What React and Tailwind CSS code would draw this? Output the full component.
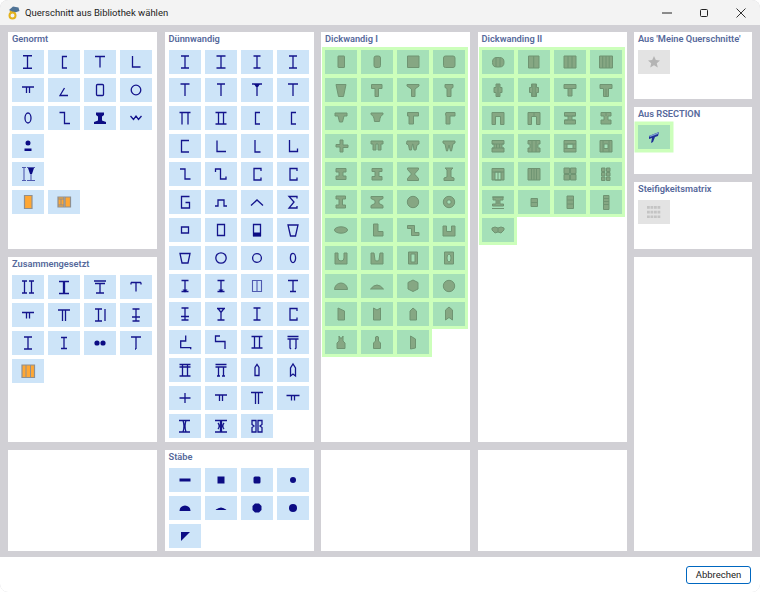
import React from 'react';

const FONT = "font-['Roboto','Noto_Sans',sans-serif]";

// path helpers, all in the 32x24 tile space
const ib = (w, h, cx = 16) =>
  `M${cx - w / 2} ${12 - h / 2}h${w}M${cx - w / 2} ${12 + h / 2}h${w}M${cx} ${12 - h / 2}v${h}`;
const tee = (w, h) => `M${16 - w / 2} ${12 - h / 2}h${w}M16 ${12 - h / 2}v${h}`;
const circ = (r, cx = 16, cy = 12) =>
  `M${cx - r} ${cy}a${r} ${r} 0 1 0 ${2 * r} 0a${r} ${r} 0 1 0 ${-2 * r} 0z`;
const oval = (rx, ry, cx = 16, cy = 12) =>
  `M${cx - rx} ${cy}a${rx} ${ry} 0 1 0 ${2 * rx} 0a${rx} ${ry} 0 1 0 ${-2 * rx} 0z`;
const rect = (x, y, w, h) => `M${x} ${y}h${w}v${h}h${-w}z`;
const rr = (x, y, w, h, r) =>
  `M${x + r} ${y}h${w - 2 * r}q${r} 0 ${r} ${r}v${h - 2 * r}q0 ${r} ${-r} ${r}h${-w + 2 * r}q${-r} 0 ${-r} ${-r}v${-h + 2 * r}q0 ${-r} ${r} ${-r}z`;

const genormt = [
  { s: ib(9, 12.5, 15.5) },
  { s: 'M19 6.5h-4.5v11.5h4.5' },
  { s: tee(10, 11) },
  { s: 'M12.5 6v11h8' },
  { s: 'M10 9h12M14.5 9v6M17.5 9v6' },
  { s: 'M20 17.5h-8l4.5-7.5' },
  { s: rr(12.5, 6.5, 7, 11, 1) },
  { s: circ(4.8) },
  { s: oval(3, 5, 16, 12) },
  { s: 'M11.5 6.5h5v11h5.5' },
  { f: 'M12 6.5h8v2.5l-2 1.5v4l4 1.5v2h-12v-2l4-1.5v-4l-2-1.5z' },
  { s: 'M10.5 10l3 3.5 2.5-3.5 2.5 3.5 3-3.5' },
  { f: circ(2.5, 16, 9) + rect(12.5, 14.5, 7, 2.5) },
  null,
  null,
  null,
  { l: ib(4, 13, 12) + 'M15 5.5h8M15 18.5h8M19 5.5v13', f: 'M16 6h6l-2 6h-2z' },
  null,
  null,
  null,
  { o: [rect(12.5, 5.5, 7.5, 13)] },
  { o: [rect(10, 7, 6, 10), rect(17, 7, 5.5, 10)], n: 'M10 9h6M10 15h6M13 9v6' },
];

const zusammen = [
  { s: ib(5, 12, 12.5) + ib(5, 12, 19.5) },
  { s: 'M11 6.5h4.5v12h-4.5M21 6.5h-4.5v12h4.5' },
  { s: 'M10 6h12M11 8.5h10M16 8.5v9M12 18h8' },
  { s: tee(10, 9) + 'M11 7.5v2M21 7.5v2' },
  { s: 'M10 9.5h12M14.5 9.5v6M17.5 9.5v6' },
  { s: 'M10 7h12M14.5 7v11M17.5 7v11' },
  { s: ib(7, 12, 14.5) + 'M21 6v12' },
  { s: ib(7, 12) + 'M12 14h8' },
  { s: ib(8, 12) },
  { s: ib(6, 11) },
  { f: circ(2.6, 13, 12) + circ(2.6, 19, 12) },
  { s: tee(10, 12) + 'M15 18h1' },
  { o: [rect(10, 6, 12.5, 12.5)], n: 'M14 6v12.5M18.5 6v12.5' },
];

const duenn = [
  { s: ib(8, 12) }, { s: ib(9, 12) }, { s: ib(7, 12) }, { s: ib(8, 12) },
  { s: tee(9, 12) }, { s: tee(8, 12) }, { s: tee(10, 12), f: 'M13 6h6l-2 3h-2z' }, { s: tee(10, 12) },
  { s: 'M10.5 6.5h11M13 6.5v12M19 6.5v12' }, { s: 'M10.5 6.5h11M10.5 18h11M13.5 6.5v11.5M18.5 6.5v11.5' }, { s: 'M19 6.5h-4.5v11.5h4.5' }, { s: 'M19 6.5h-4.5v11.5h4.5' },
  { s: 'M20 6.5h-7.5v11.5h7.5' }, { s: 'M12 6.5v11h9' }, { s: 'M14 6v12h5.5' }, { s: 'M12.5 6v11.5h8v-3' },
  { s: 'M11 7h5v10h5.5' }, { s: 'M10.5 10v-3h5v10h5.5v-2.5' }, { s: 'M20 9v-2.5h-7v11.5h7v-2.5' }, { s: 'M20 9v-2.5h-7v11.5h7v-2.5' },
  { s: 'M20.5 6.5h-8v11.5h8v-5.5h-4' }, { s: 'M10 16h3v-6h6v6h3' }, { s: 'M10 15.5l6-5.5 6 5.5' }, { s: 'M20 8.5v-2h-8l5 5.5-5 6h8v-2' },
  { s: rect(12.5, 9, 7, 6) }, { s: rect(12.5, 6.5, 7, 11) }, { s: rect(12.5, 6.5, 7, 11), f: rect(12, 14.5, 8, 4) }, { s: 'M11 7h10l-2.5 11h-5z' },
  { s: 'M11 7.5h10l-2 9.5h-6z' }, { s: circ(5.2) }, { s: circ(4.4) }, { s: oval(2.6, 4.6) },
  { s: ib(7, 11), f: 'M13.5 15.5h5l-2.5 3z' }, { s: ib(7, 11), f: 'M13.5 15.5h5l-2.5 3z' }, { l: rect(11.5, 6.5, 9, 11) + 'M16 6.5v11' }, { s: tee(10, 11) + 'M13 17.5h6' },
  { s: ib(7, 12) + 'M12 14.5h8' }, { s: 'M12 6.5h8M13 6.5l3 4 3-4M16 10v8M12.5 18h7' }, { s: ib(7, 12) }, { s: 'M20 9v-2.5h-7v11.5h7v-2.5' },
  { s: 'M16.7 5.5v5.5h-5v6.7h10v1.5' }, { s: 'M15 6h-4.5v5.5h9.5v7.5' }, { s: 'M10.5 6.5h11M10.5 18h11M13.5 6.5v11.5M18.5 6.5v11.5' }, { s: 'M10.5 6.5h11M10.5 9h11M13 9v9l1 1M19 9v9l-1 1' },
  { s: 'M10.5 6.5h11M10.5 18h11M13.5 6.5v11.5M18.5 6.5v11.5M10.5 9h11' }, { s: 'M10.5 6.5h11M10.5 9h11M13.5 9v9M18.5 9v9M12 18h3M17 18h3' }, { s: 'M14 17.5v-8l2-3 2 3v8z' }, { s: 'M13.5 18v-8l2.5-4 2.5 4v8l-2.5-2z' },
  { s: 'M10.5 12h11M16 7v10' }, { s: 'M10 9h12M14.5 9v6M17.5 9v6' }, { s: 'M10 6.5h12M14.5 6.5v11.5M17.5 6.5v11.5' }, { s: 'M9.5 9.5h13M14.5 9.5v5M17.5 9.5v5' },
  { s: 'M10 6.5h11M10 18h11M14 6.5q2 5.5 0 11.5M17 6.5q-2 5.5 0 11.5' }, { s: 'M10 6.5h5.5v11.5h-5.5M22 6.5h-5.5v11.5h5.5M13 9q2.5 3 0 6M19 9q-2.5 3 0 6' }, { s: 'M15 6.5h-4v4l2 1.5-2 1.5v4.5h4zM17 6.5h4v4l-2 1.5 2 1.5v4.5h-4z' },
];

const staebe = [
  { f: rect(10.5, 10.5, 11, 3) },
  { f: rect(12.5, 8.5, 7, 7) },
  { f: rr(12.5, 8.5, 7, 7, 1.5) },
  { f: circ(3) },
  { f: 'M10.5 15a5.5 5.5 0 0 1 11 0z' },
  { f: 'M10.5 14q5.5-5 11 0z' },
  { f: 'M14 7.5h4l2.5 2.5v4l-2.5 2.5h-4l-2.5-2.5v-4z' },
  { f: circ(4) },
  { f: 'M12 8h9l-9 9z' },
];

const dick1 = [
  { g: rr(13, 6, 6.5, 11.5, 0.5) }, { g: rr(13, 6, 6.5, 11.5, 2) }, { g: rect(10.5, 6, 11.5, 11.5) }, { g: rr(10.5, 6, 11.5, 11.5, 2) },
  { g: 'M11 6.5h10l-2.5 12h-5z' }, { g: 'M10.5 6.5h10.5v4h-3.5v8h-3.5v-8h-3.5z' }, { g: 'M10 6.5h12v1.5l-4 3v7.5h-3.5v-7.5l-4.5-3z' }, { g: 'M12 6.5h8v3l-2 1v8h-4v-8l-2-1z' },
  { g: 'M10 7h12v3h-3l-1.5 6h-3l-1.5-6h-3z' }, { g: 'M10 7h12v1.5q-3 1-3.5 7h-5q-.5-6-3.5-7z' }, { g: 'M10.5 6.5h11v3.5h-5v8h-4.5v-8h-1.5z' }, { g: 'M13 6.5h9v3.5h-5v8h-4v-8q-1-2 0-3.5z' },
  { g: 'M15 6h3v5h5v2.5h-5v4.5h-3v-5h-4v-2.5h4z' }, { g: 'M10 7h12v3h-2v6h-3v-6h-2v6h-3v-6h-2z' }, { g: 'M10 7h12v3l-2 1-1 5h-2l-1-6h-.5l-1 6h-2l-1-5-2-1z' }, { g: 'M10 7h12v2l-2 1-1.5 7h-1l-1.5-6-1.5 6h-1l-1.5-7-2-1z' },
  { g: 'M11 6.5h10v3.5h-3v4h3v3.5h-10v-3.5h3v-4h-3z' }, { g: 'M11 6.5h10v3h-3v5h3v3.5h-10v-3.5h3v-5h-3z' }, { g: 'M10.5 6h11v1.5l-4 4.5 4 4.5v2h-11v-2l4-4.5-4-4.5z' }, { g: 'M12 6h8l-2 2v7l3 1v2.5h-10v-2.5l3-1v-7z' },
  { g: 'M11 6h9.5v3h-3v6h3v3h-9.5v-3h3v-6h-3z' }, { g: 'M10 6.5h12v2l-4 2v3l4 2v2.5h-12v-2.5l4-2v-3l-4-2z' }, { g: circ(5.7) }, { g: circ(5.7) + circ(2.2), e: true },
  { g: oval(6.5, 3.2) }, { g: 'M12.5 6h4.5v7.5h5v4.5h-9.5z' }, { g: 'M10.5 7.5h7v7h4.5v3h-7.5v-7h-4z' }, { g: 'M10 8h3.5v5.5h5v-5.5h3.5v10h-12z' },
  { g: 'M10 7h3v5q0 3 3 3t3-3v-5h3v11h-12z' }, { g: 'M10 7h3l1 7q0 1 2 1t2-1l1-7h3v11h-12z' }, { g: rect(11.5, 6, 9, 12) + rect(14, 8, 4, 8), e: true }, { g: rect(11.5, 6, 9, 12) + oval(2, 4), e: true },
  { g: 'M9.5 15.5a6.5 6.5 0 0 1 13 0z' }, { g: 'M9.5 15q6.5-8 13 0z' }, { g: 'M16 6l5 2.5v6.5l-5 2.5-5-2.5v-6.5z' }, { g: circ(5.7) },
  { g: 'M13 6l6.5 3v9h-6.5z' }, { g: 'M12.5 6l3.5 2 3.5-2v12h-7z' }, { g: 'M13 9l3-3 3.5 3v9h-6.5z' }, { g: 'M12.5 8l3.5-3 3.5 3v10l-3.5-2.5-3.5 2.5z' },
  { g: 'M14 6l1 2h2l1-2v5l2 2v5.5h-8v-5.5l2-2z' }, { g: 'M14.5 7q1.5-1.5 3 0v4l2 2v5.5h-7v-5.5l2-2z' }, { g: 'M13.5 6l5 3v9l-5 1z' },
];

const dick2 = [
  { g: rr(10.5, 7.5, 11.5, 9.5, 4.5), n: 'M14 7.5v9.5M18 7.5v9.5' },
  { g: rect(10.5, 6, 10.5, 12), n: 'M15.7 6v12' },
  { g: rect(10, 6, 12, 12), n: 'M14 6v12M18 6v12' },
  { g: rect(9.5, 6, 13, 12), n: 'M12.7 6v12M16 6v12M19.2 6v12' },
  { g: 'M14 6h4v3.5h2v5h-2v4h-4v-4h-2v-5h2z', n: 'M16 6v12.5' },
  { g: 'M13.5 6h5v3.5h2v5h-2v4h-5v-4h-2v-5h2z', n: 'M14.8 6v12.5M17.2 6v12.5' },
  { g: 'M10 6.5h12v4h-4v7.5h-4v-7.5h-4z', n: 'M10 10.5h12' },
  { g: 'M10 6.5h12v4h-3.5v8h-5v-8h-3.5z', n: 'M16 10.5v8' },
  { g: 'M10 6.5h12v12h-3.5v-8h-5v8h-3.5z', n: 'M13.5 10.5h5' },
  { g: 'M10 6.5h12v12h-3.5v-8h-5v8h-3.5z', n: 'M16 6.5v4' },
  { g: 'M10.5 6.5h11v3.5h-3.5v4h3.5v4h-11v-4h3.5v-4h-3.5z', n: 'M10.5 10h11M10.5 14h11' },
  { g: 'M11 6.5h10v3.5h-3v4h3v4h-10v-4h3v-4h-3z', n: 'M16 6.5v3.5' },
  { g: 'M10 6.5h12v3.5h-2v4h2v4h-12v-4h2v-4h-2z', n: 'M10 10h12M10 14h12M14.5 10v4M17.5 10v4' },
  { g: 'M10 6.5h12v3.5h-2v4h2v4h-12v-4h2v-4h-2z', n: 'M14 6.5v11.5M18 6.5v11.5' },
  { g: rect(10, 6.5, 12, 11.5) + rect(13, 10, 6, 4.5), e: true, n: 'M10 10h12M10 14.5h12' },
  { g: rect(10, 6.5, 12, 11.5) + rect(14, 10, 4, 4.5), e: true, n: 'M13 6.5v11.5M19 6.5v11.5' },
  { g: rect(10, 6.5, 12, 11.5) + rect(13, 10, 6, 8), e: true, n: 'M10 10h12M16 10v8' },
  { g: rect(10, 6.5, 12, 11.5), n: 'M13.5 6.5v11.5M16 6.5v11.5M18.5 6.5v11.5' },
  { g: rect(10, 6, 5.5, 5.5) + rect(16.5, 6, 5.5, 5.5) + rect(10, 12.5, 5.5, 5.5) + rect(16.5, 12.5, 5.5, 5.5) },
  { g: rect(11.5, 6, 3.5, 3.5) + rect(16.5, 6, 3.5, 3.5) + rect(11.5, 10.5, 3.5, 3.5) + rect(16.5, 10.5, 3.5, 3.5) + rect(11.5, 15, 3.5, 3.5) + rect(16.5, 15, 3.5, 3.5) },
  { g: 'M11 7h10v3h-3v4h3.5v2h-11v-2h3.5v-4h-3z', n: 'M10 18.5h12M10 7h12M16 10v4' },
  { g: rect(13, 8.5, 6.5, 8), n: 'M13 12.5h6.5' },
  { g: rect(13, 6, 6.5, 12.5), n: 'M13 10h6.5M13 14h6.5' },
  { g: rect(13.5, 5.5, 5.5, 14), n: 'M13.5 8.5h5.5M13.5 11.5h5.5M13.5 14.5h5.5' },
  { g: 'M10 10l3-1 3 1 3-1 3 1v2l-3 3-3-1-3 1-3-3z', n: 'M16 10v4' },
];

const Icon = ({ s, f, l, o, n, g, e }) => (
  <svg width="32" height="24" viewBox="0 0 32 24" fill="none">
    {o && o.map((d, i) => <path key={i} d={d} fill="#ffa733" stroke="#8f8f8f" strokeWidth="1.2" />)}
    {g && <path d={g} fill="#86a783" stroke="#6f9472" strokeWidth="1" fillRule={e ? 'evenodd' : 'nonzero'} />}
    {l && <path d={l} stroke="#4f5ab0" strokeWidth="1.1" />}
    {s && <path d={s} stroke="#14148c" strokeWidth="1.3" />}
    {f && <path d={f} fill="#0c0c84" />}
    {n && <path d={n} stroke={g ? '#6f9472' : '#8f8f8f'} strokeWidth="1" />}
  </svg>
);

const Panel = ({ title, children }) => (
  <div className="bg-white min-h-0">
    {title && (
      <div className="h-[18px] pl-1 text-[9.25px] leading-[14px] font-semibold text-[#56699b] whitespace-nowrap">
        {title}
      </div>
    )}
    {children}
  </div>
);

const TileGrid = ({ icons, green }) => (
  <div className="grid grid-cols-[repeat(4,32px)] auto-rows-[24px] gap-1 pl-1">
    {icons.map((icon, i) =>
      icon ? (
        <div
          key={i}
          className={green ? 'bg-[#a5e0b8] shadow-[0_0_0_3px_#ccffbb]' : 'bg-[#cde4f8]'}
        >
          <Icon {...icon} />
        </div>
      ) : (
        <div key={i} />
      )
    )}
  </div>
);

const PanelColumn = ({ children }) => (
  <div className="grid grid-rows-[410px_101px] gap-y-2 w-[149px]">{children}</div>
);

export default function App() {
  return (
    <div className={`w-[760px] h-[592px] flex flex-col bg-[#d1d0d5] rounded-lg overflow-hidden ${FONT}`}>
      {/* title bar */}
      <div className="h-[25px] shrink-0 bg-[#f3f3f3] flex items-center pl-[7px] text-[#1c1c1c]">
        <svg width="13" height="14" viewBox="0 0 13 14">
          <path d="M2 4l4-3.5 5.5 1 1 3.500-6 2z" fill="#4f7396" />
          <circle cx="5.5" cy="9.5" r="3" fill="none" stroke="#e3b21c" strokeWidth="2" />
          <path d="M3 5l2 2" stroke="#e3b21c" strokeWidth="1.5" />
        </svg>
        <span className="ml-[5px] text-[9.5px] leading-none whitespace-nowrap">Querschnitt aus Bibliothek wählen</span>
        <div className="ml-auto flex items-center pr-[1px]">
          <div className="w-[37px] flex justify-center">
            <svg width="10" height="10" viewBox="0 0 10 10"><path d="M0 5h10" stroke="#222" /></svg>
          </div>
          <div className="w-[37px] flex justify-center">
            <svg width="10" height="10" viewBox="0 0 10 10"><rect x="1.5" y="1.5" width="7" height="7" rx="1" fill="none" stroke="#222" /></svg>
          </div>
          <div className="w-[37px] flex justify-center">
            <svg width="10" height="10" viewBox="0 0 10 10"><path d="M.5.5l9 9M9.5.5l-9 9" stroke="#333" /></svg>
          </div>
        </div>
      </div>

      {/* library panels */}
      <div className="flex-1 min-h-0 flex gap-x-[7.5px] pl-2 pt-[7px]">
        <div className="grid grid-rows-[217px_185px_101px] gap-y-[8px] w-[149px] h-[519px]">
          <Panel title="Genormt"><TileGrid icons={genormt} /></Panel>
          <Panel title="Zusammengesetzt"><TileGrid icons={zusammen} /></Panel>
          <Panel />
        </div>
        <PanelColumn>
          <Panel title="Dünnwandig"><TileGrid icons={duenn} /></Panel>
          <Panel title="Stäbe"><TileGrid icons={staebe} /></Panel>
        </PanelColumn>
        <PanelColumn>
          <Panel title="Dickwandig I"><TileGrid icons={dick1} green /></Panel>
          <Panel />
        </PanelColumn>
        <PanelColumn>
          <Panel title="Dickwanding II"><TileGrid icons={dick2} green /></Panel>
          <Panel />
        </PanelColumn>
        <div className="grid grid-rows-[66.5px_66.5px_66.5px_294px] gap-y-[8.5px] w-[118px]">
          <Panel title="Aus 'Meine Querschnitte'">
            <div className="ml-1 w-8 h-6 bg-[#e3e3e3] flex items-center justify-center">
              <svg width="14" height="14" viewBox="0 0 14 14"><path d="M7 1l1.8 4 4.2.4-3.2 2.8 1 4.3L7 10.2 3.2 12.5l1-4.3L1 5.4 5.2 5z" fill="#b4b4b4" /></svg>
            </div>
          </Panel>
          <Panel title="Aus RSECTION">
            <div className="ml-1 w-8 h-6 bg-[#a5e0b8] shadow-[0_0_0_3.5px_#ccffbb] flex items-center justify-center">
              <svg width="16" height="16" viewBox="0 0 16 16">
                <path d="M3 7l10-4-1 4-3 1-2 5-2 1 1-5-3 1z" fill="#1f2f96" />
                <path d="M3 7l10-4-1 2-8 3z" fill="#7fa3cf" />
              </svg>
            </div>
          </Panel>
          <Panel title="Steifigkeitsmatrix">
            <div className="ml-1 w-8 h-6 bg-[#e3e3e3] flex items-center justify-center">
              <svg width="14" height="12" viewBox="0 0 14 12" fill="#c4c4c4">
                <path d={[0, 4.7, 9.4].flatMap(y => [0, 3.5, 7, 10.5].map(x => rect(x, y, 2.8, 2.8))).join('')} />
              </svg>
            </div>
          </Panel>
          <Panel />
        </div>
      </div>

      {/* footer */}
      <div className="h-[35px] shrink-0 bg-white flex items-center justify-end pr-[9px]">
        <button className="w-[65px] h-[18px] bg-white border border-[#0067c0] rounded-[3px] text-[9.5px] leading-none text-[#1c1c1c]">
          Abbrechen
        </button>
      </div>
    </div>
  );
}
